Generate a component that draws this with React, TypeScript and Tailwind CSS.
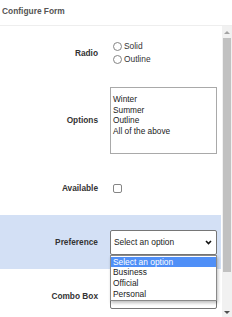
import React from 'react'

function Radio({ label }: { label: string }) {
    return (
        <div className="flex items-center h-[13px]">
            <span className="ml-[3px] w-[9px] h-[9px] rounded-full border border-[#858585] bg-white" />
            <span className="ml-[2px] text-[8.4px] text-[#333]">{label}</span>
        </div>
    )
}

function Row({ label, children, className = '' }: { label: string; children: React.ReactNode; className?: string }) {
    return (
        <div className={`flex items-center min-h-[54px] py-[7px] ${className}`}>
            <div className="w-[98px] text-right text-[8.3px] font-bold text-[#333]">{label}</div>
            <div className="ml-[12px] relative">{children}</div>
        </div>
    )
}

function Scrollbar() {
    return (
        <div className="w-[10px] bg-[#f1f1f1] flex flex-col items-center">
            <div className="h-[12px] flex items-center justify-center">
                <div className="w-0 h-0 border-l-[3px] border-r-[3px] border-b-[3px] border-l-transparent border-r-transparent border-b-[#a3a3a3]" />
            </div>
            <div className="w-[8px] h-[234px] bg-[#c1c1c1]" />
            <div className="flex-1" />
            <div className="h-[10px] flex items-center justify-center">
                <div className="w-0 h-0 border-l-[3px] border-r-[3px] border-t-[3px] border-l-transparent border-r-transparent border-t-[#505050]" />
            </div>
        </div>
    )
}

export default function App() {
    const opciones = ['Winter', 'Summer', 'Outline', 'All of the above']
    const preferencias = ['Select an option', 'Business', 'Official', 'Personal']

    return (
        <div className="w-[232px] h-[317px] flex flex-col bg-white overflow-hidden font-['Liberation_Sans',Arial,sans-serif]">
            <div className="h-[26px] shrink-0 border-b border-[#eeeeee] flex items-center px-[2px] pb-[2px] text-[8.4px] font-bold text-[#555]">
                Configure Form
            </div>
            <div className="flex flex-1 min-h-0">
                <div className="flex-1 overflow-hidden">
                    <Row label="Radio">
                        <Radio label="Solid" />
                        <Radio label="Outline" />
                    </Row>
                    <Row label="Options">
                        <div className="w-[107px] h-[67px] border border-[#a9a9a9] pt-[6px] px-[2px] text-[8.3px] leading-[10.7px] text-[#222]">
                            {opciones.map(o => <div key={o}>{o}</div>)}
                        </div>
                    </Row>
                    <Row label="Available">
                        <span className="block ml-[3px] w-[9px] h-[9px] rounded-[2px] border border-[#858585] bg-white" />
                    </Row>
                    <Row label="Preference" className="bg-[#d3e0f5] mr-[1px]">
                        <div className="w-[107px] h-[25px] rounded-[2px] border border-[#767676] bg-white flex items-center justify-between pl-[3px] pr-[4px] text-[8.4px] text-[#222]">
                            <span>Select an option</span>
                            <svg width="7" height="5" viewBox="0 0 7 5">
                                <path d="M1 1 L3.5 3.5 L6 1" stroke="#111" strokeWidth="1.6" fill="none" />
                            </svg>
                        </div>
                        <div className="absolute top-full left-0 z-10 w-[107px] border border-[#8a8a8a] bg-white shadow-[1px_2px_3px_rgba(0,0,0,0.25)] py-[1px] text-[8.4px] leading-[10.7px] text-[#222]">
                            {preferencias.map((p, i) => (
                                <div key={p} className={`px-[2px] ${i === 0 ? 'bg-[#4f8ff7] text-white' : ''}`}>{p}</div>
                            ))}
                        </div>
                    </Row>
                    <Row label="Combo Box">
                        <div className="w-[107px] h-[25px] rounded-[2px] border border-[#767676] bg-white" />
                    </Row>
                </div>
                <Scrollbar />
            </div>
        </div>
    )
}
